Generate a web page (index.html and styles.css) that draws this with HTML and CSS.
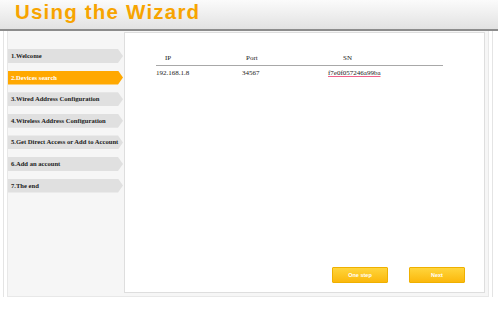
FILE: index.html
```html
<!DOCTYPE html>
<html>
<head>
<meta charset="utf-8">
<link rel="stylesheet" href="styles.css">
</head>
<body>
<div class="header"><h1 class="title">Using the Wizard</h1></div>
<div class="frame">
  <div class="inner">
    <ul class="steps">
      <li class="step">1.Welcome</li>
      <li class="step active">2.Devices search</li>
      <li class="step">3.Wired Address Configuration</li>
      <li class="step">4.Wireless Address Configuration</li>
      <li class="step">5.Get Direct Access or Add to Account</li>
      <li class="step">6.Add an account</li>
      <li class="step">7.The end</li>
    </ul>
    <div class="content">
      <div class="table">
        <div class="row head">
          <div class="c1 h">IP</div>
          <div class="c2 h">Port</div>
          <div class="c3 h">SN</div>
        </div>
        <div class="row">
          <div class="c1">192.168.1.8</div>
          <div class="c2">34567</div>
          <div class="c3"><span class="sn">f7e0f057246a99ba</span></div>
        </div>
      </div>
      <div class="actions">
        <button class="btn">One step</button>
        <button class="btn">Next</button>
      </div>
    </div>
  </div>
</div>
</body>
</html>
```
FILE: styles.css
```css
html, body { margin: 0; padding: 0; background: #fff; }
body { width: 498px; height: 310px; overflow: hidden; }

.header {
  height: 29px;
  background: linear-gradient(#fbfbfb, #e2e2e2);
  border-bottom: 2px solid #8c8c8c;
  box-sizing: content-box;
}
.title {
  margin: 0;
  padding: 1px 0 0 15px;
  font-family: "Liberation Sans", Arial, sans-serif;
  font-weight: bold;
  font-size: 20.5px;
  letter-spacing: 1.2px;
  line-height: 22px;
  color: #f7a400;
}

.frame {
  margin: 0 5px 0 3px;
  border-left: 1px solid #e4e4e4;
  border-right: 1px solid #e4e4e4;
  padding: 0 3px 0 3px;
  height: 266px;
}
.inner {
  display: flex;
  height: 266px;
  box-sizing: border-box;
  background: #f6f6f6;
  border: 1px solid #e8e8e8;
  border-top: none;
}

.steps {
  list-style: none;
  margin: 0;
  padding: 18px 0 0 0;
  width: 116px;
  display: flex;
  flex-direction: column;
  gap: 7.6px;
}
.step {
  height: 14px;
  line-height: 14px;
  padding-left: 3px;
  width: 112px;
  background: #e0e0e0;
  clip-path: polygon(0 0, 110px 0, 115px 50%, 110px 100%, 0 100%);
  font-family: "Liberation Serif", "Times New Roman", serif;
  font-weight: bold;
  font-size: 6.6px;
  color: #222;
  white-space: nowrap;
}
.step.active {
  background: #ffa800;
  color: #fff;
}

.content {
  flex: 1;
  display: flex;
  flex-direction: column;
  background: #fff;
  border: 1px solid #dedede;
  margin: 1px 3px 3px 0;
}

.table {
  margin: 18px 0 0 31px;
  width: 287px;
  font-family: "Liberation Serif", "Times New Roman", serif;
  font-size: 7px;
  color: #222;
}
.row { display: flex; height: 15px; line-height: 15px; }
.row.head {
  height: 14px;
  line-height: 14px;
  border-bottom: 1px solid #a8a8a8;
}
.c1 { width: 86px; }
.c2 { width: 86px; }
.c3 { flex: 1; }
.c1.h { padding-left: 9px; width: 77px; }
.c2.h { padding-left: 4px; width: 82px; }
.c3.h { padding-left: 15px; }
.sn {
  text-decoration: underline;
  text-decoration-color: #f0608a;
  text-underline-offset: 1px;
}

.actions {
  margin-top: auto;
  display: flex;
  justify-content: flex-end;
  gap: 21px;
  padding: 0 19px 9px 0;
}
.btn {
  width: 56px;
  height: 16px;
  padding: 0;
  border: 1px solid #efb000;
  border-radius: 1px;
  background: linear-gradient(#ffd53c, #fbb80c);
  color: #fff;
  font-family: "Liberation Sans", Arial, sans-serif;
  font-size: 5.5px;
  font-weight: bold;
}
```
